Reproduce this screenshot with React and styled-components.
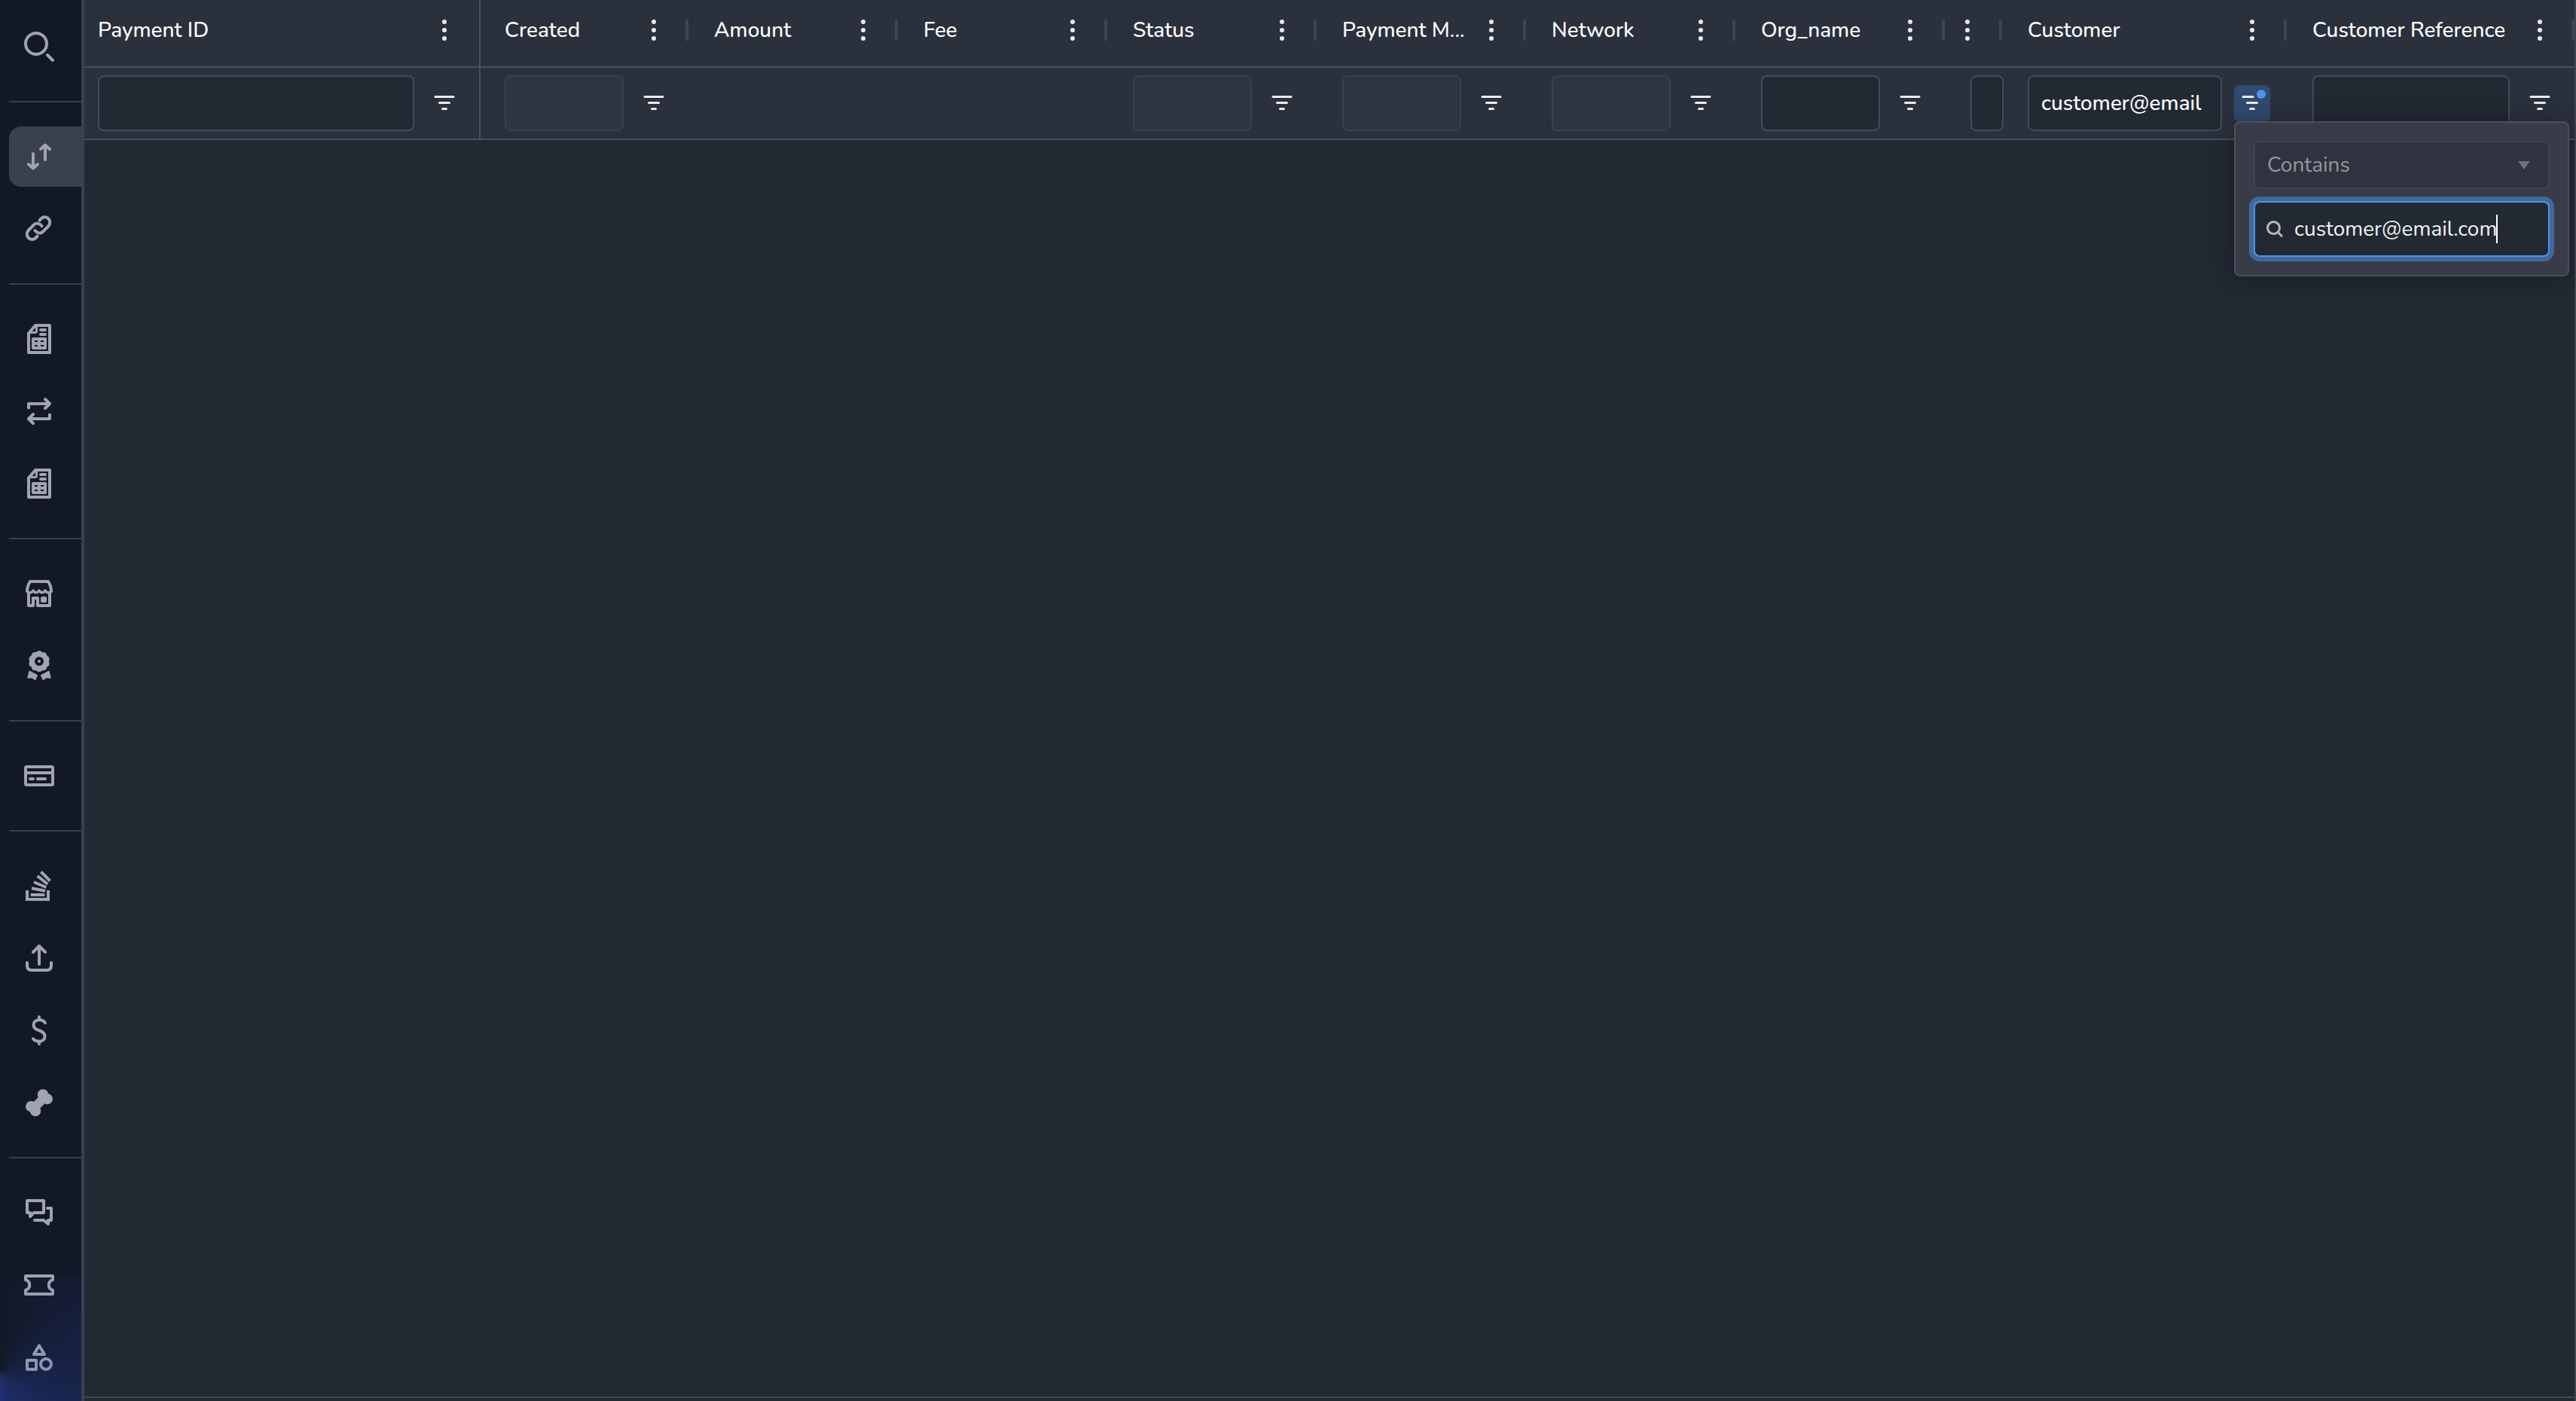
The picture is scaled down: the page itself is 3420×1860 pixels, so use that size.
import { Fragment } from "react";
import styled, { createGlobalStyle } from "styled-components";

const columns = [
  { name: "Payment ID", width: 526, filter: "text", pinned: true },
  { name: "Created", width: 274, filter: "disabled", first: true },
  { name: "Amount", width: 278 },
  { name: "Fee", width: 278 },
  { name: "Status", width: 278, filter: "disabled" },
  { name: "Payment M...", width: 278, filter: "disabled" },
  { name: "Network", width: 278, filter: "disabled" },
  { name: "Org_name", width: 278, filter: "text" },
  { name: "", width: 76, filter: "narrow" },
  { name: "Customer", width: 378, filter: "text", value: "customer@email", open: true },
  { name: "Customer Reference", width: 382, filter: "text" },
];

const menu = [
  ["transfers", "link"],
  ["report", "repeat", "report"],
  ["store", "award"],
  ["card"],
  ["stack", "upload", "dollar", "bone"],
  ["chat", "ticket", "shapes"],
];

const petals = Array.from({ length: 10 }, (_, i) => {
  const a = (i * Math.PI) / 5 - Math.PI / 2;
  return [20 + 10.2 * Math.cos(a), 14 + 10.2 * Math.sin(a)];
});

const icons = {
  search: (
    <>
      <circle cx="16" cy="16" r="14" />
      <path d="M31 31l7 7" />
    </>
  ),
  transfers: <path d="M28 24V4.5M22 10l6-5.5 6 5.5M12 16v19.5M6 30l6 5.5 6-5.5" />,
  link: (
    <path d="M20.5 8.5C24 3.5 29 3 32 6c3 3 3 7.5 0 10.5l-7 7c-3 3-7.5 2.5-10.5-1.5M17.5 29.5C14 34.5 9 35 6 32c-3-3-3-7.5 0-10.5l7-7c3-3 7.5-2.5 10.5 1.5" />
  ),
  report: (
    <>
      <path d="M6 12.5L15 2h19v36H6z" />
      <path d="M16.5 3v6.5q0 2-2 2H7" strokeWidth="3" />
      <path d="M22 8h6M22 14h6" />
      <path
        d="M12 18h16q2 0 2 2v12q0 2-2 2H12q-2 0-2-2V20q0-2 2-2zM14 22v2h4v-2zM22 22v2h4v-2zM14 28v2h4v-2zM22 28v2h4v-2z"
        fill="currentColor"
        fillRule="evenodd"
        stroke="none"
      />
    </>
  ),
  repeat: <path d="M6 15.5V10h28M28 4l6 6-6 6M34 24.5V30H6M12 24l-6 6 6 6" />,
  store: (
    <>
      <path d="M4 17C4 12 5.500 8 8 4h24c2.500 4 4 8 4 13" />
      <path d="M4 16.500q4 5 8-.5q4 5.500 8 0q4 5.500 8 0q4 5.500 8 .5" strokeWidth="3.500" />
      <path d="M6 19v17h6V26h6v10h16V19" />
      <rect x="22" y="24" width="8" height="8" rx="2" fill="currentColor" stroke="none" />
    </>
  ),
  award: (
    <>
      <g fill="currentColor" stroke="none">
        {petals.map(([x, y]) => (
          <circle key={`${x}${y}`} cx={x} cy={y} r="3.8" />
        ))}
        <path d="M7 27l10.500 5.500-2.800 6.500-4-3-6 .5z" />
        <path d="M33 27l-10.500 5.500 2.800 6.500 4-3 6 .5z" />
        <circle cx="20" cy="14" r="2" />
      </g>
      <circle cx="20" cy="14" r="9.500" strokeWidth="7" />
      <path d="M7 27l10.500 5.500-2.800 6-4-3-5.700.5zM33 27l-10.500 5.500 2.800 6 4-3 5.700.5z" strokeWidth="1.200" />
    </>
  ),
  card: (
    <>
      <rect x="2" y="8" width="36" height="24" rx="1.500" />
      <path d="M2 16h36M8 24h4M18 24h10" />
    </>
  ),
  stack: (
    <path
      d="M4 26v12h28V26M8.700 32h18.600M10 23.300l18 3.400M13 15l16.300 7M17.700 7l13.600 10.700M22.500 1.500l12 12"
      strokeLinecap="butt"
      strokeLinejoin="miter"
    />
  ),
  upload: <path d="M20 28V4M12 12l8-8 8 8M4 26v4q0 6 6 6h20q6 0 6-6v-4" />,
  dollar: (
    <path d="M20 2v4M20 34.500V38M28 10C26 7 23 6 20 6c-5 0-7.500 3.500-7.500 6.500 0 5 3.500 6 7.500 7.500 4.500 1.500 7.500 3.500 7.500 8 0 4-3 6.500-7.500 6.500-4 0-6.500-1.500-8-3.500" />
  ),
  bone: (
    <>
      <g fill="currentColor" stroke="none">
        <circle cx="25" cy="9.200" r="7.200" />
        <circle cx="30.800" cy="15" r="7.200" />
        <circle cx="9.200" cy="25" r="7.200" />
        <circle cx="15" cy="30.800" r="7.200" />
      </g>
      <path d="M14 26l12-12" strokeWidth="12" />
    </>
  ),
  chat: <path d="M4 4h22v16H13l-5 5v-5H4zM31 14h5v16h-4v5l-6-5H14" />,
  ticket: <path d="M2 8h36v5c-7 2.500-7 11.500 0 14v5H2v-5c7-2.500 7-11.500 0-14z" />,
  shapes: (
    <>
      <path d="M20 4.500L27 16H13z" />
      <rect x="4" y="24" width="12" height="12" />
      <circle cx="29" cy="29" r="7" />
    </>
  ),
};

const Icon = ({ name }) => <IconSvg viewBox="0 0 40 40">{icons[name]}</IconSvg>;

const MenuDots = () => (
  <Dots>
    <i />
    <i />
    <i />
  </Dots>
);

const FilterIcon = ({ active }) => (
  <FilterSvg viewBox="0 0 48 48">
    <path d={active ? "M12 15.500h13" : "M12 15.500h24"} />
    <path d="M17.500 23.500h13M21.500 31.500h5" />
    {active && <circle cx="36" cy="12" r="6" />}
  </FilterSvg>
);

const FilterPopup = () => (
  <Popup>
    <Select>
      Contains
      <Arrow />
    </Select>
    <SearchBox>
      <SearchSvg viewBox="0 0 22 22">
        <circle cx="9.500" cy="9.500" r="8" />
        <path d="M15 15l6 6" />
      </SearchSvg>
      <span>customer@email.com</span>
      <Caret />
    </SearchBox>
  </Popup>
);

const App = () => {
  return (
    <Page>
      <GlobalStyle />
      <Sidebar>
        <SearchItem>
          <Icon name="search" />
        </SearchItem>
        {menu.map((group, i) => (
          <Fragment key={i}>
            <Divider />
            <MenuGroup>
              {group.map((name, j) => (
                <MenuItem key={j} $active={name === "transfers"}>
                  <Icon name={name} />
                </MenuItem>
              ))}
            </MenuGroup>
          </Fragment>
        ))}
        <Glow />
      </Sidebar>
      <Main>
        <Grid>
          <HeaderRow>
            {columns.map((col) => (
              <HeaderCell key={col.name} $width={col.width} $pinned={col.pinned} $first={col.first}>
                <Title>{col.name}</Title>
                <MenuDots />
                {!col.pinned && <Separator />}
              </HeaderCell>
            ))}
          </HeaderRow>
          <FilterRow>
            {columns.map((col) => (
              <FilterCell key={col.name} $width={col.width} $pinned={col.pinned} $first={col.first}>
                {col.filter && (
                  <FilterInput
                    $narrow={col.filter === "narrow"}
                    disabled={col.filter === "disabled"}
                    defaultValue={col.value}
                  />
                )}
                {col.filter && col.filter !== "narrow" && (
                  <FilterButton $open={col.open}>
                    <FilterIcon active={col.open} />
                    {col.open && <FilterPopup />}
                  </FilterButton>
                )}
              </FilterCell>
            ))}
          </FilterRow>
        </Grid>
      </Main>
    </Page>
  );
};

const GlobalStyle = createGlobalStyle`
  * {
    box-sizing: border-box;
  }

  body {
    margin: 0;
    background: #222933;
    color: #fff;
    font-family: Nunito, Lato, sans-serif;
    font-size: 28px;
  }
`;

const Page = styled.div`
  display: flex;
  height: 1860px;
  overflow: hidden;
`;

const Sidebar = styled.nav`
  position: relative;
  width: 112px;
  flex-shrink: 0;
  padding-left: 12px;
  border-right: 4px solid #3b404f;
  background: #121826;
  color: #a0a4af;
`;

const SearchItem = styled.div`
  height: 134px;
  padding: 42px 0 0 20px;
`;

const Divider = styled.div`
  height: 2px;
  background: #383d49;
`;

const MenuGroup = styled.div`
  display: flex;
  flex-direction: column;
  gap: 16px;
  padding: 32px 0;
`;

const MenuItem = styled.div`
  display: flex;
  align-items: center;
  height: 80px;
  padding-left: 20px;
  border-radius: 16px 0 0 16px;
  background: ${({ $active }) => ($active ? "#3b404f" : "transparent")};
`;

const IconSvg = styled.svg`
  display: block;
  width: 40px;
  height: 40px;
  fill: none;
  stroke: currentColor;
  stroke-width: 4;
  stroke-linecap: round;
  stroke-linejoin: round;
`;

/* blue light in the bottom corner, it also tints the icons */
const Glow = styled.div`
  position: absolute;
  left: 0;
  right: 0;
  bottom: 0;
  height: 164px;
  pointer-events: none;
  background: conic-gradient(
    from 0deg at 0 127px,
    rgba(48, 76, 200, 0) 0deg,
    rgba(48, 76, 200, 0.2) 90deg,
    rgba(48, 76, 200, 0.45) 180deg
  );
`;

const Main = styled.main`
  flex: 1;
  min-width: 0;
  border-right: 2px solid #3f4450;
`;

const Grid = styled.div`
  height: 1856px;
  border-bottom: 2px solid #424853;
`;

const Row = styled.div`
  display: flex;
  background: #2b313c;
  border-bottom: 2px solid #4a4f5a;
`;

const HeaderRow = styled(Row)`
  height: 90px;
`;

const FilterRow = styled(Row)`
  height: 96px;
`;

const Cell = styled.div`
  display: flex;
  align-items: center;
  flex-shrink: 0;
  width: ${({ $width }) => $width}px;
  padding-left: ${({ $pinned, $first }) => ($pinned ? 18 : $first ? 32 : 36)}px;
  border-right: ${({ $pinned }) => ($pinned ? "2px solid #4a4f5a" : "none")};
`;

const HeaderCell = styled(Cell)`
  padding-right: ${({ $pinned }) => ($pinned ? 22 : 0)}px;
  padding-bottom: 8px;
`;

const FilterCell = styled(Cell)`
  padding-right: ${({ $pinned }) => ($pinned ? 22 : 20)}px;
`;

const Title = styled.span`
  flex: 1;
  min-width: 0;
  font-weight: 500;
  white-space: nowrap;
`;

const Dots = styled.div`
  display: flex;
  flex-direction: column;
  align-items: center;
  flex-shrink: 0;
  gap: 5px;
  width: 48px;

  ${Title}:empty + & {
    margin-left: -44px;
  }

  i {
    width: 6px;
    height: 6px;
    border-radius: 50%;
    background: #e9eaec;
  }
`;

const Separator = styled.div`
  flex-shrink: 0;
  width: 4px;
  height: 28px;
  margin: 0 -2px 0 18px;
  background: #3f4450;
`;

const FilterInput = styled.input`
  flex: ${({ $narrow }) => ($narrow ? "none" : "1")};
  width: 44px;
  min-width: 0;
  height: 74px;
  padding: 0 16px;
  border: 2px solid #454a56;
  border-radius: 8px;
  background: #222933;
  color: #fff;
  font: inherit;
  font-weight: 500;

  &:disabled {
    border-color: #3b404b;
    background: #2f3540;
  }
`;

const FilterButton = styled.div`
  position: relative;
  flex-shrink: 0;
  width: 48px;
  height: 48px;
  margin-left: 16px;
  border-radius: 6px;
  background: ${({ $open }) => ($open ? "#314a6d" : "transparent")};
`;

const FilterSvg = styled.svg`
  display: block;
  width: 48px;
  height: 48px;
  fill: #4a94ee;

  path {
    stroke: #e9eaec;
    stroke-width: 3;
    stroke-linecap: round;
  }
`;

const Popup = styled.div`
  position: absolute;
  z-index: 1;
  top: 48px;
  left: 0;
  display: flex;
  flex-direction: column;
  gap: 16px;
  width: 445px;
  height: 206px;
  padding: 24px;
  border: 2px solid #4a4f5a;
  border-radius: 8px;
  background: #373c48;
  box-shadow: 0 0 32px rgba(0, 0, 0, 0.3);
`;

const Select = styled.div`
  display: flex;
  align-items: center;
  justify-content: space-between;
  height: 64px;
  padding: 0 24px 0 16px;
  border: 2px solid #3f4450;
  border-radius: 8px;
  background: #2e333f;
  color: #94979e;
`;

const Arrow = styled.i`
  border: 8px solid transparent;
  border-top: 11px solid #6c717a;
  border-bottom: 0;
`;

const SearchBox = styled.div`
  display: flex;
  align-items: center;
  height: 74px;
  padding-left: 15px;
  border: 2px solid #4a94ee;
  border-radius: 8px;
  background: #222933;
  box-shadow: 0 0 0 6px #426899;
  color: #f0f1f2;
`;

const SearchSvg = styled.svg`
  width: 22px;
  height: 22px;
  margin-right: 15px;
  fill: none;
  stroke: #b5b7ba;
  stroke-width: 3;
`;

const Caret = styled.i`
  width: 2px;
  height: 38px;
  margin-left: -1px;
  background: #fff;
`;

export default App;
